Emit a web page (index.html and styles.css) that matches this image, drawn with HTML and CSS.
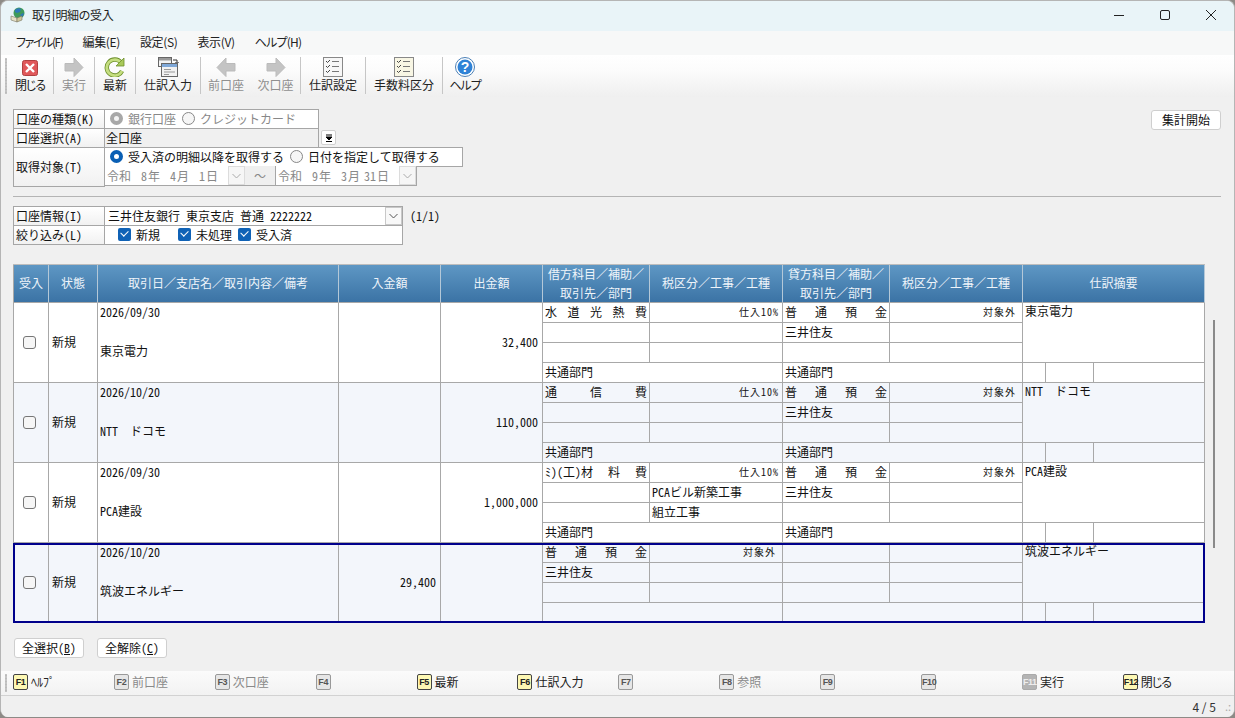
FILE: index.html
```html
<!DOCTYPE html>
<html lang="ja">
<head>
    <meta charset="UTF-8">
    <title>取引明細の受入</title>
    <link rel="stylesheet" href="styles.css">
</head>
<body>
<div class="window">
    <!-- タイトルバー -->
    <div class="titlebar">
        <svg class="appicon" width="16" height="16" viewBox="0 0 16 16">
            <circle cx="9" cy="6" r="5.500" fill="#3f9a5a"/>
            <path d="M5 3c2-2 5-2 6-1l-1 3-3 1-2-1zM10 8l3-2 1 1-2 3z" fill="#2f78b8"/>
            <path d="M1 9l6 2v4l-6-2z" fill="#e8e2c8" stroke="#77735f" stroke-width=".6"/>
            <path d="M7 11l5-2v4l-5 2z" fill="#cfc69a" stroke="#77735f" stroke-width=".6"/>
        </svg>
        <span class="title">取引明細の受入</span>
        <div class="winctrl">
            <svg width="12" height="12" viewBox="0 0 12 12"><path d="M1 6.500h10" stroke="#222" fill="none"/></svg>
            <svg width="12" height="12" viewBox="0 0 12 12"><rect x="1.500" y="1.500" width="9" height="9" rx="1.500" stroke="#222" fill="none"/></svg>
            <svg width="12" height="12" viewBox="0 0 12 12"><path d="M1 1l10 10M11 1L1 11" stroke="#222" fill="none"/></svg>
        </div>
    </div>

    <!-- メニュー -->
    <div class="menubar">
        <span class="m1">ファイル(F)</span>
        <span>編集(E)</span>
        <span>設定(S)</span>
        <span>表示(V)</span>
        <span class="m5">ヘルプ(H)</span>
    </div>

    <!-- ツールバー -->
    <div class="toolbar">
        <div class="grip"></div>
        <div class="tool first w42 sep">
            <svg width="22" height="20" viewBox="0 0 22 20">
                <rect x="3.500" y="3.500" width="15" height="15" rx="2" fill="#e0585a" stroke="#b04040"/>
                <path d="M7 7l8 8M15 7l-8 8" stroke="#fff" stroke-width="2.400"/>
            </svg>
            <span class="kana">閉じる</span>
        </div>
        <div class="tool w41 sep off">
            <svg width="22" height="20" viewBox="0 0 22 20"><path d="M2 6.500h9V1l9 9.500-9 9V14H2z" fill="#c4c4c4" stroke="#bbb"/></svg>
            <span>実行</span>
        </div>
        <div class="tool w41 sep">
            <svg width="22" height="20" viewBox="0 0 22 20">
                <path d="M17 5.500A8 8 0 1 0 18 14" fill="none" stroke="#6d8f2c" stroke-width="4.400"/>
                <path d="M17 5.500A8 8 0 1 0 18 14" fill="none" stroke="#c5de80" stroke-width="2.800"/>
                <path d="M20 1v8h-8z" fill="#a9c95a" stroke="#6d8f2c" stroke-width=".8"/>
            </svg>
            <span>最新</span>
        </div>
        <div class="tool w65 sep">
            <svg width="22" height="20" viewBox="0 0 22 20">
                <rect x="1.500" y=".5" width="13" height="9" fill="#f4f4f4" stroke="#666"/>
                <rect x="2" y="1" width="12" height="2.500" fill="#999"/>
                <path d="M16 3h4v3M18.500 5l1.500 1.800L21.500 5" fill="none" stroke="#333"/>
                <rect x="4.500" y="6.500" width="16" height="13" fill="#f2f2f2" stroke="#666"/>
                <rect x="5" y="7" width="15" height="3" fill="#7fa8d8"/>
                <path d="M7 12.500h7M7 15h11M7 17.500h5" stroke="#999"/>
            </svg>
            <span>仕訳入力</span>
        </div>
        <div class="tool w50 off">
            <svg width="22" height="20" viewBox="0 0 22 20"><path d="M20 6.500h-9V1l-9 9.500 9 9V14h9z" fill="#c4c4c4" stroke="#bbb"/></svg>
            <span>前口座</span>
        </div>
        <div class="tool w50 sep off">
            <svg width="22" height="20" viewBox="0 0 22 20"><path d="M2 6.500h9V1l9 9.500-9 9V14H2z" fill="#c4c4c4" stroke="#bbb"/></svg>
            <span>次口座</span>
        </div>
        <div class="tool w65 sep">
            <svg width="22" height="20" viewBox="0 0 22 20">
                <rect x="1.500" y=".5" width="19" height="19" fill="#f7f7f7" stroke="#888"/>
                <path d="M4 4l1.500 1.500L8 3M4 9l1.500 1.500L8 8M4 14l1.500 1.500L8 13" fill="none" stroke="#444"/>
                <path d="M10 4.500h7M10 9.500h7M10 14.500h7" stroke="#777"/>
            </svg>
            <span>仕訳設定</span>
        </div>
        <div class="tool w77 sep">
            <svg width="22" height="20" viewBox="0 0 22 20">
                <rect x="1.500" y=".5" width="19" height="19" fill="#f8f6e4" stroke="#888"/>
                <path d="M4 4l1.500 1.500L8 3M4 9l1.500 1.500L8 8M4 14l1.500 1.500L8 13" fill="none" stroke="#444"/>
                <path d="M10 4.500h7M10 9.500h7M10 14.500h7" stroke="#777"/>
            </svg>
            <span>手数料区分</span>
        </div>
        <div class="tool w44">
            <svg width="22" height="20" viewBox="0 0 22 20">
                <circle cx="11" cy="10" r="9.500" fill="#fff" stroke="#4a7fb5"/>
                <circle cx="11" cy="10" r="7.500" fill="#2f82d6"/>
                <text x="11" y="15" text-anchor="middle" class="helpmark">?</text>
            </svg>
            <span class="kana">ヘルプ</span>
        </div>
    </div>

    <div class="content">
        <div class="top-area">
            <div class="form">
                <div class="field">
                    <div class="label">口座の種類<span class="an">(K)</span></div>
                    <div class="value w215 muted">
                        <i class="radio on-gray"></i><span class="opt">銀行口座</span>
                        <i class="radio"></i><span>クレジットカード</span>
                    </div>
                </div>
                <div class="field">
                    <div class="label">口座選択<span class="an">(A)</span></div>
                    <div class="value w215 gray">全口座</div>
                    <div class="dropbtn">
                        <svg width="8" height="8" viewBox="0 0 8 8"><path d="M1 1h6M1 3l3 3 3-3zM1 7.500h6" stroke="#000" fill="#000"/></svg>
                    </div>
                </div>
                <div class="field tall">
                    <div class="label">取得対象<span class="an">(T)</span></div>
                    <div class="stack">
                        <div class="value w360">
                            <i class="radio on"></i><span class="opt">受入済の明細以降を取得する</span>
                            <i class="radio"></i><span>日付を指定して取得する</span>
                        </div>
                        <div class="daterow">
                            <div class="date w125">令和<span class="an">8</span>年<span class="an">4</span>月<span class="an">1</span>日</div>
                            <div class="datebtn"><svg width="9" height="6" viewBox="0 0 9 6"><path d="M.5 1l4 4 4-4" fill="none" stroke="#aaa"/></svg></div>
                            <div class="tilde">～</div>
                            <div class="date w125">令和<span class="an">9</span>年<span class="an">3</span>月<span class="an two">31</span>日</div>
                            <div class="datebtn"><svg width="9" height="6" viewBox="0 0 9 6"><path d="M.5 1l4 4 4-4" fill="none" stroke="#aaa"/></svg></div>
                        </div>
                    </div>
                </div>
            </div>
            <button class="btn start">集計開始</button>
        </div>

        <div class="divider"></div>

        <div class="form">
            <div class="field">
                <div class="label">口座情報<span class="an">(I)</span></div>
                <div class="value w300 combo">
                    <span class="an">三井住友銀行 東京支店 普通 2222222</span>
                    <div class="combobtn"><svg width="9" height="6" viewBox="0 0 9 6"><path d="M.5 1l4 4 4-4" fill="none" stroke="#555"/></svg></div>
                </div>
                <span class="an count">(1/1)</span>
            </div>
            <div class="field">
                <div class="label">絞り込み<span class="an">(L)</span></div>
                <div class="value w300 checks">
                    <i class="check"></i><span class="ck1">新規</span>
                    <i class="check"></i><span class="ck2">未処理</span>
                    <i class="check"></i><span>受入済</span>
                </div>
            </div>
        </div>

        <!-- 明細テーブル -->
        <div class="grid-table">
            <div class="head">
                <div>受入</div>
                <div>状態</div>
                <div>取引日／支店名／取引内容／備考</div>
                <div>入金額</div>
                <div>出金額</div>
                <div>借方科目／補助／<br>取引先／部門</div>
                <div>税区分／工事／工種</div>
                <div>貸方科目／補助／<br>取引先／部門</div>
                <div>税区分／工事／工種</div>
                <div class="span3">仕訳摘要</div>
            </div>

            <div class="row">
                <div class="c tall center"><i class="box"></i></div>
                <div class="c tall mid">新規</div>
                <div class="c tall desc"><span class="an">2026/09/30</span><span class="name">東京電力</span></div>
                <div class="c tall amount"></div>
                <div class="c tall amount an">32,400</div>
                <div class="c dist"><span>水</span><span>道</span><span>光</span><span>熱</span><span>費</span></div>
                <div class="c tax">仕入<span class="an">10%</span></div>
                <div class="c dist"><span>普</span><span>通</span><span>預</span><span>金</span></div>
                <div class="c tax spaced">対象外</div>
                <div class="c memo">東京電力</div>
                <div class="c"></div><div class="c"></div>
                <div class="c">三井住友</div><div class="c"></div>
                <div class="c"></div><div class="c"></div>
                <div class="c"></div><div class="c"></div>
                <div class="c wide">共通部門</div>
                <div class="c wide">共通部門</div>
                <div class="c"></div><div class="c"></div><div class="c"></div>
            </div>

            <div class="row alt">
                <div class="c tall center"><i class="box"></i></div>
                <div class="c tall mid">新規</div>
                <div class="c tall desc"><span class="an">2026/10/20</span><span class="name"><span class="an">NTT</span>　ドコモ</span></div>
                <div class="c tall amount"></div>
                <div class="c tall amount an">110,000</div>
                <div class="c dist"><span>通</span><span>信</span><span>費</span></div>
                <div class="c tax">仕入<span class="an">10%</span></div>
                <div class="c dist"><span>普</span><span>通</span><span>預</span><span>金</span></div>
                <div class="c tax spaced">対象外</div>
                <div class="c memo"><span class="an">NTT</span>　ドコモ</div>
                <div class="c"></div><div class="c"></div>
                <div class="c">三井住友</div><div class="c"></div>
                <div class="c"></div><div class="c"></div>
                <div class="c"></div><div class="c"></div>
                <div class="c wide">共通部門</div>
                <div class="c wide">共通部門</div>
                <div class="c"></div><div class="c"></div><div class="c"></div>
            </div>

            <div class="row">
                <div class="c tall center"><i class="box"></i></div>
                <div class="c tall mid">新規</div>
                <div class="c tall desc"><span class="an">2026/09/30</span><span class="name"><span class="an">PCA</span>建設</span></div>
                <div class="c tall amount"></div>
                <div class="c tall amount an">1,000,000</div>
                <div class="c dist"><span class="an">ﾐ)(工)材</span><span>料</span><span>費</span></div>
                <div class="c tax">仕入<span class="an">10%</span></div>
                <div class="c dist"><span>普</span><span>通</span><span>預</span><span>金</span></div>
                <div class="c tax spaced">対象外</div>
                <div class="c memo"><span class="an">PCA</span>建設</div>
                <div class="c"></div><div class="c"><span class="an">PCA</span>ビル新築工事</div>
                <div class="c">三井住友</div><div class="c"></div>
                <div class="c"></div><div class="c">組立工事</div>
                <div class="c"></div><div class="c"></div>
                <div class="c wide">共通部門</div>
                <div class="c wide">共通部門</div>
                <div class="c"></div><div class="c"></div><div class="c"></div>
            </div>

            <div class="row alt selected">
                <div class="c tall center"><i class="box"></i></div>
                <div class="c tall mid">新規</div>
                <div class="c tall desc"><span class="an">2026/10/20</span><span class="name">筑波エネルギー</span></div>
                <div class="c tall amount an">29,400</div>
                <div class="c tall amount"></div>
                <div class="c dist"><span>普</span><span>通</span><span>預</span><span>金</span></div>
                <div class="c tax spaced">対象外</div>
                <div class="c"></div>
                <div class="c"></div>
                <div class="c memo">筑波エネルギー</div>
                <div class="c">三井住友</div><div class="c"></div>
                <div class="c"></div><div class="c"></div>
                <div class="c"></div><div class="c"></div>
                <div class="c"></div><div class="c"></div>
                <div class="c wide"></div>
                <div class="c wide"></div>
                <div class="c"></div><div class="c"></div><div class="c"></div>
            </div>
            <div class="scroll-thumb"></div>
        </div>

        <div class="actions">
            <button class="btn">全選択<span class="an">(<u>B</u>)</span></button>
            <button class="btn">全解除<span class="an">(<u>C</u>)</span></button>
        </div>
    </div>

    <!-- ファンクションキー -->
    <div class="fkeys">
        <div class="grip small"></div>
        <div class="fkeys-list">
            <div class="fk"><b class="cap">F1</b><span>ﾍﾙﾌﾟ</span></div>
            <div class="fk off"><b class="cap">F2</b><span>前口座</span></div>
            <div class="fk off"><b class="cap">F3</b><span>次口座</span></div>
            <div class="fk off"><b class="cap">F4</b></div>
            <div class="fk"><b class="cap">F5</b><span>最新</span></div>
            <div class="fk"><b class="cap">F6</b><span>仕訳入力</span></div>
            <div class="fk off"><b class="cap">F7</b></div>
            <div class="fk off"><b class="cap">F8</b><span>参照</span></div>
            <div class="fk off"><b class="cap">F9</b></div>
            <div class="fk off"><b class="cap">F10</b></div>
            <div class="fk dis"><b class="cap">F11</b><span>実行</span></div>
            <div class="fk"><b class="cap">F12</b><span class="kana">閉じる</span></div>
        </div>
    </div>

    <div class="statusbar">
        <span>4 / 5</span>
        <i class="resize">.:</i>
    </div>
</div>
</body>
</html>
```
FILE: styles.css
```css
* {
    margin: 0;
    padding: 0;
    box-sizing: border-box;
}

html, body {
    width: 100%;
    height: 100%;
    overflow: hidden;
    background: #8d8a86;
}

body {
    font-family: "Noto Sans CJK JP", "Liberation Sans", sans-serif;
    font-size: 12px;
    line-height: 19px;
    color: #111;
}

.window {
    display: flex;
    flex-direction: column;
    height: 717px;
    background: #f0f0f0;
    border: 1px solid #b5b5b5;
    border-bottom: 0;
    border-radius: 8px;
    overflow: hidden;
}

/* 半角文字 */
.an {
    font-feature-settings: "hwid";
}

/* かな詰め */
.kana {
    font-feature-settings: "palt";
    letter-spacing: -1px;
}

/* タイトルバー */
.titlebar {
    flex: 0 0 30px;
    display: flex;
    align-items: center;
    padding: 0 0 3px 9px;
    background: #e9f4f8;
}

.appicon {
    margin-right: 6px;
}

.title {
    font-feature-settings: "palt";
    letter-spacing: -0.3px;
    margin-bottom: 1px;
    color: #222;
}

.winctrl {
    margin-left: auto;
    display: flex;
    gap: 34px;
    padding-right: 17px;
}

/* メニュー */
.menubar {
    flex: 0 0 24px;
    display: flex;
    align-items: center;
    gap: 20px;
    padding: 0 0 4px 15px;
    background: #f7f8f8;
    font-feature-settings: "palt";
    letter-spacing: -0.35px;
    color: #222;
}

.m1 { letter-spacing: -1.4px; }
.m5 { letter-spacing: -0.8px; }

/* ツールバー */
.toolbar {
    flex: 0 0 42px;
    display: flex;
    background: linear-gradient(#ffffff, #fbfbfb 40%, #efefef);
}

.grip {
    width: 7px;
    margin: 3px 0 3px 4px;
    background-image: radial-gradient(#bbb 0.8px, transparent 1px);
    background-size: 2px 3px;
    background-repeat: repeat-y;
}

.grip.small {
    flex: 0 0 7px;
    margin: 3px 0 3px 4px;
}

.tool {
    display: flex;
    flex-direction: column;
    align-items: center;
    justify-content: flex-end;
    height: 37px;
    margin-top: 2px;
    padding-bottom: 1px;
    font-feature-settings: "palt";
    line-height: 16px;
    color: #222;
}

.tool.first {
    padding-right: 5px;
}

.tool svg {
    display: block;
}

.tool.sep {
    border-right: 1px solid #c6c6c6;
}

.tool.off {
    color: #8f8f8f;
}

.w41 { width: 41px; }
.w42 { width: 42px; }
.w44 { width: 44px; }
.w50 { width: 50px; }
.w65 { width: 65px; }
.w77 { width: 77px; }

.helpmark {
    font-family: "Liberation Sans", sans-serif;
    font-size: 14px;
    font-weight: bold;
    fill: #fff;
}

/* フォーム */
.content {
    flex: 1;
    padding: 12px 0 0 12px;
}

.top-area {
    display: flex;
    justify-content: space-between;
    padding-right: 13px;
}

.field {
    display: flex;
    height: 20px;
    margin-bottom: -1px;
}

.field.tall {
    height: 40px;
}

.label {
    flex: 0 0 92px;
    display: flex;
    align-items: center;
    padding: 0 0 2px 2px;
    background: linear-gradient(#ffffff, #f1f1f1);
    border: 1px solid #a6a6a6;
}

.value {
    display: flex;
    align-items: center;
    margin-left: -1px;
    background: #fff;
    border: 1px solid #a6a6a6;
    padding: 0 0 2px 5px;
    white-space: nowrap;
}

.value.gray {
    background: #f0f0f0;
    padding-left: 1px;
}

.muted { color: #888; }

.w215 { width: 215px; }
.w300 { width: 299px; }
.w360 { width: 359px; }

.radio {
    width: 13px;
    height: 13px;
    margin-right: 5px;
    border: 1px solid #888;
    border-radius: 50%;
    background: #f6f6f6;
    flex: none;
}

.radio.on {
    border: 4px solid #0a5fb4;
    background: #fff;
}

.radio.on-gray {
    border: 4px solid #a8a8a8;
    background: #f4f4f4;
}

.opt {
    margin-right: 6px;
}

.dropbtn {
    width: 15px;
    height: 15px;
    margin: 2px 0 0 2px;
    display: flex;
    align-items: center;
    justify-content: center;
    background: #fff;
    border: 1px solid #d0d0d0;
    border-radius: 2px;
}

.stack {
    display: flex;
    flex-direction: column;
    margin-left: -1px;
}

.stack .value {
    margin-left: 0;
    height: 20px;
}

.daterow {
    display: flex;
    height: 20px;
    margin-top: -1px;
    border: 1px solid #a6a6a6;
    border-top: 0;
    width: 313px;
    background: #fff;
    color: #888;
}

.date {
    padding-left: 2px;
    white-space: nowrap;
}

.w125 { width: 123px; }

.date .an {
    margin: 0 1px 0 10px;
}

.date .an.two {
    margin: 0 1px 0 4px;
}

.datebtn {
    width: 17px;
    display: flex;
    align-items: center;
    justify-content: center;
    background: #f6f6f6;
    border: 1px solid #dcdcdc;
}

.tilde {
    width: 31px;
    text-align: center;
    background: #efefef;
    border-right: 1px solid #a6a6a6;
}

.combo {
    padding: 0 0 0 3px;
    justify-content: space-between;
}

.combo .an {
    margin-bottom: 2px;
}

.combobtn {
    width: 17px;
    height: 18px;
    display: flex;
    align-items: center;
    justify-content: center;
    background: #f8f8f8;
    border: 1px solid #c8c8c8;
}

.count {
    margin: 0 0 2px 7px;
    align-self: center;
}

.checks {
    padding-left: 13px;
}

.check {
    position: relative;
    width: 13px;
    height: 13px;
    margin-right: 5px;
    flex: none;
    background: #0f62b6;
    border-radius: 2px;
}

.check::after {
    content: "";
    position: absolute;
    left: 3px;
    top: 2px;
    width: 6px;
    height: 4px;
    border-left: 1px solid #fff;
    border-bottom: 1px solid #fff;
    transform: rotate(-45deg);
}

.ck1 { margin-right: 18px; }
.ck2 { margin-right: 6px; }

.btn {
    font: inherit;
    height: 20px;
    width: 70px;
    line-height: 18px;
    color: #111;
    background: #fff;
    border: 1px solid #cfcfcf;
    border-radius: 3px;
}

.start {
    margin-top: 1px;
}

.divider {
    height: 1px;
    margin: 10px 13px 9px 0;
    background: #b4b4b4;
}

/* 明細テーブル */
.grid-table {
    position: relative;
    margin-top: 20px;
    width: 1192px;
}

.head,
.row {
    display: grid;
    grid-template-columns: 36px 49px 241px 102px 102px 107px 133px 107px 133px 23px 48px 111px;
}

.head {
    height: 39px;
    grid-template-rows: 38px;
    border-top: 1px solid #bdbdbd;
    background: linear-gradient(#5e97c4, #3a72a4);
    color: #eef4fa;
    text-align: center;
}

.head div {
    display: flex;
    align-items: center;
    justify-content: center;
    padding-bottom: 2px;
    border-right: 1px solid #b4c8d8;
    border-bottom: 1px solid #a8a8a8;
}

.head div:first-child {
    border-left: 1px solid #a8a8a8;
}

.head .span3 {
    grid-column: span 3;
}

.row {
    grid-template-rows: repeat(4, 20px);
    height: 80px;
    background: #fff;
}

.row.alt {
    background: #f3f6fb;
}

.c {
    padding-left: 2px;
    line-height: 17px;
    border-right: 1px solid #a8a8a8;
    border-bottom: 1px solid #a8a8a8;
    white-space: nowrap;
    overflow: hidden;
}

.c:first-child {
    border-left: 1px solid #a8a8a8;
}

.tall {
    grid-row: span 4;
}

.center {
    display: flex;
    align-items: center;
    justify-content: center;
    padding: 0 3px 0 0;
}

.box {
    width: 13px;
    height: 13px;
    border: 1px solid #767676;
    border-radius: 3px;
    background: #f6f6f6;
}

.mid {
    display: flex;
    align-items: center;
    padding: 0 0 2px 3px;
}

.desc {
    display: flex;
    flex-direction: column;
}

.name {
    margin-top: 22px;
}

.amount {
    display: flex;
    align-items: center;
    justify-content: flex-end;
    padding: 0 4px 2px 0;
}

.dist {
    display: flex;
    justify-content: space-between;
    padding-right: 2px;
}

.tax {
    text-align: right;
    font-size: 10px;
    letter-spacing: 1px;
    padding-right: 3px;
}

.tax.spaced {
    padding-right: 6px;
}

.memo {
    grid-column: span 3;
    grid-row: span 3;
    line-height: 16px;
    overflow: visible;
}

.wide {
    grid-column: span 2;
}

.selected {
    outline: 2px solid #00008b;
    outline-offset: -2px;
    box-shadow: 0 -1px 0 #8f9ae0;
}

.scroll-thumb {
    position: absolute;
    left: 1200px;
    top: 56px;
    width: 2px;
    height: 228px;
    background: #8a8a8a;
}

.actions {
    display: flex;
    gap: 13px;
    margin: 15px 0 0 1px;
}

/* ファンクションキー */
.fkeys {
    flex: 0 0 25px;
    display: flex;
    background: linear-gradient(#fbfbfb, #f2f2f2);
    border-bottom: 1px solid #d2d2d2;
}

.fkeys-list {
    display: grid;
    grid-template-columns: repeat(12, 100.9px);
    align-items: center;
    margin-left: 1px;
    padding-bottom: 2px;
}

.fk {
    display: flex;
    align-items: center;
    gap: 3px;
    color: #222;
}

.cap {
    width: 15px;
    height: 16px;
    font-family: "Liberation Sans", sans-serif;
    font-size: 9px;
    line-height: 14px;
    text-align: center;
    background: #fdf8b4;
    border: 1px solid #444;
    border-radius: 2px;
    letter-spacing: -0.4px;
}

.fk span {
    margin-bottom: 1px;
}

.fk.off {
    color: #8a8a8a;
}

.fk.off .cap {
    background: #e6e6e6;
    color: #555;
    border-color: #999;
}

.fk.dis .cap {
    background: #b4b4b4;
    color: #eee;
    border-color: #aaa;
}

.statusbar {
    flex: 0 0 21px;
    display: flex;
    align-items: center;
    justify-content: flex-end;
    padding-right: 3px;
    background: #f0f0f0;
    color: #333;
}

.resize {
    margin-left: 9px;
    color: #aaa;
    font-style: normal;
    font-size: 11px;
}
```
